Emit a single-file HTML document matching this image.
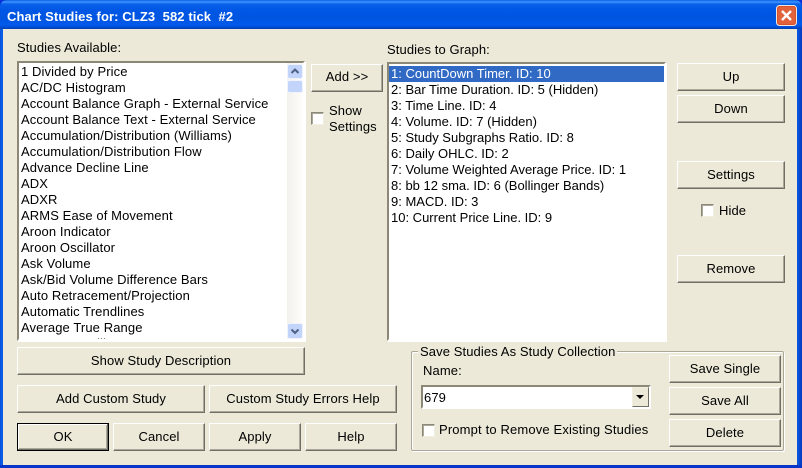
<!DOCTYPE html>
<html><head><meta charset="utf-8">
<style>
html,body{margin:0;padding:0;width:802px;height:468px;overflow:hidden;background:#0831d9}
*{box-sizing:border-box}
body{position:relative;font-family:"Liberation Sans",sans-serif;font-size:13px;color:#000;letter-spacing:.1px}
.a{position:absolute}
#tb{left:0;top:0;width:802px;height:29px;border-radius:7px 7px 0 0;background:linear-gradient(to bottom,#0a5fe0 0,#3d95ff 2px,#0a62ea 4px,#0058e6 9px,#0055e0 18px,#0259ec 25px,#0047c8 28px,#003bb0 29px)}
#title{left:7px;top:8px;color:#fff;font-weight:bold;font-size:13px;line-height:18px;white-space:pre;letter-spacing:.1px}
#cl{left:3px;top:29px;width:794px;height:436px;background:#ece9d8}
#lb{left:0;top:29px;width:3px;height:439px;background:linear-gradient(to right,#0855dd,#0b5fe8)}
#rb{left:797px;top:29px;width:5px;height:439px;background:linear-gradient(to right,#0a5ae0,#0438c0)}
#bb{left:0;top:465px;width:802px;height:3px;background:#0635c8}
.b{position:absolute;background:#ece9d8;border:1px solid;border-color:#fff #716f64 #716f64 #fff;box-shadow:inset -1px -1px 0 #aca899;text-align:center;white-space:pre;line-height:26px}
.l{position:absolute;white-space:pre;line-height:16px}
.list{position:absolute;background:#fff;border:2px solid;border-color:#8b8878 #fff #fff #8b8878;box-shadow:1px 1px 0 #fff;overflow:hidden}
.list div{position:absolute;left:2px;white-space:pre;line-height:16px;height:16px}
.cb{position:absolute;width:13px;height:13px;background:#fff;border:1px solid #8a8878;border-right-color:#f1efe2;border-bottom-color:#f1efe2;box-shadow:inset 1px 1px 0 #aca899}
#sel{background:#316ac5;color:#fff;left:0!important;width:275px;padding-left:2px}
</style></head><body>
<div class="a" id="tb"></div>
<div class="a" id="title">Chart Studies for: CLZ3  582 tick  #2</div>
<svg class="a" style="left:776px;top:5px" width="21" height="21" viewBox="0 0 21 21">
<rect x=".5" y=".5" width="20" height="20" rx="3" fill="#d8532c" stroke="#f0e8e4"/>
<rect x="2" y="2" width="17" height="17" rx="2" fill="#e2623c"/>
<path d="M6 6L15 15M15 6L6 15" stroke="#fff" stroke-width="2.4" fill="none"/>
</svg>
<div class="a" id="lb"></div><div class="a" id="rb"></div><div class="a" id="bb"></div>
<div class="a" id="cl"></div>

<div class="l" style="left:17px;top:40px">Studies Available:</div>
<div class="l" style="left:387px;top:42px">Studies to Graph:</div>

<div class="list" style="left:17px;top:61px;width:288px;height:280px">
<div style="top:1px">1 Divided by Price</div>
<div style="top:17px">AC/DC Histogram</div>
<div style="top:33px">Account Balance Graph - External Service</div>
<div style="top:49px">Account Balance Text - External Service</div>
<div style="top:65px">Accumulation/Distribution (Williams)</div>
<div style="top:81px">Accumulation/Distribution Flow</div>
<div style="top:97px">Advance Decline Line</div>
<div style="top:113px">ADX</div>
<div style="top:129px">ADXR</div>
<div style="top:145px">ARMS Ease of Movement</div>
<div style="top:161px">Aroon Indicator</div>
<div style="top:177px">Aroon Oscillator</div>
<div style="top:193px">Ask Volume</div>
<div style="top:209px">Ask/Bid Volume Difference Bars</div>
<div style="top:225px">Auto Retracement/Projection</div>
<div style="top:241px">Automatic Trendlines</div>
<div style="top:257px">Average True Range</div>
<div style="top:273px">Average Oscillator</div>
<div class="a" style="left:268px;top:0;width:16px;height:276px;background:linear-gradient(to right,#f3f1ec,#fdfdfb)"></div>
</div>
<svg class="a" style="left:287px;top:64px" width="16" height="30" viewBox="0 0 16 30">
<rect x=".5" y=".5" width="15" height="14" rx="2" fill="#c3d4fb" stroke="#eef3fe"/>
<path d="M4.5 9L8 5.5L11.5 9" stroke="#4d6185" stroke-width="2" fill="none"/>
<rect x=".5" y="16.5" width="15" height="12" rx="2" fill="#c3d4fb" stroke="#eef3fe"/>
</svg>
<svg class="a" style="left:287px;top:323px" width="16" height="17" viewBox="0 0 16 17">
<rect x=".5" y=".5" width="15" height="15" rx="2" fill="#c3d4fb" stroke="#eef3fe"/>
<path d="M4.5 6.5L8 10L11.5 6.5" stroke="#4d6185" stroke-width="2" fill="none"/>
</svg>

<div class="b" style="left:311px;top:64px;width:72px;height:28px;line-height:24px">Add &gt;&gt;</div>
<div class="cb" style="left:311px;top:112px"></div>
<div class="l" style="left:329px;top:103px">Show</div>
<div class="l" style="left:329px;top:119px">Settings</div>

<div class="list" style="left:387px;top:62px;width:279px;height:279px;letter-spacing:0">
<div id="sel" style="top:2px">1: CountDown Timer. ID: 10</div>
<div style="top:18px">2: Bar Time Duration. ID: 5 (Hidden)</div>
<div style="top:34px">3: Time Line. ID: 4</div>
<div style="top:50px">4: Volume. ID: 7 (Hidden)</div>
<div style="top:66px">5: Study Subgraphs Ratio. ID: 8</div>
<div style="top:82px">6: Daily OHLC. ID: 2</div>
<div style="top:98px">7: Volume Weighted Average Price. ID: 1</div>
<div style="top:114px">8: bb 12 sma. ID: 6 (Bollinger Bands)</div>
<div style="top:130px">9: MACD. ID: 3</div>
<div style="top:146px">10: Current Price Line. ID: 9</div>
</div>

<div class="b" style="left:677px;top:63px;width:108px;height:28px">Up</div>
<div class="b" style="left:677px;top:95px;width:108px;height:28px">Down</div>
<div class="b" style="left:677px;top:161px;width:108px;height:28px">Settings</div>
<div class="cb" style="left:701px;top:204px"></div>
<div class="l" style="left:719px;top:203px">Hide</div>
<div class="b" style="left:677px;top:255px;width:108px;height:28px">Remove</div>

<div class="b" style="left:17px;top:347px;width:288px;height:28px">Show Study Description</div>
<div class="b" style="left:17px;top:385px;width:188px;height:28px">Add Custom Study</div>
<div class="b" style="left:209px;top:385px;width:188px;height:28px">Custom Study Errors Help</div>
<div class="b" style="left:17px;top:423px;width:92px;height:28px;border:1px solid #000;box-shadow:inset -1px -1px 0 #716f64,inset 1px 1px 0 #fff,inset -2px -2px 0 #aca899;line-height:26px">OK</div>
<div class="b" style="left:113px;top:423px;width:92px;height:28px">Cancel</div>
<div class="b" style="left:209px;top:423px;width:92px;height:28px">Apply</div>
<div class="b" style="left:305px;top:423px;width:92px;height:28px">Help</div>

<div class="a" style="left:411px;top:351px;width:373px;height:100px;border:1px solid #aca899;box-shadow:1px 1px 0 #fff,inset 1px 1px 0 #fff;border-radius:2px"></div>
<div class="l" style="left:418px;top:344px;background:#ece9d8;padding:0 2px">Save Studies As Study Collection</div>
<div class="l" style="left:423px;top:363px">Name:</div>
<div class="a" style="left:421px;top:385px;width:230px;height:24px;background:#fff;border:2px solid;border-color:#8b8878 #fff #fff #8b8878;line-height:22px;padding-left:1px;font-size:13px">679</div>
<div class="a" style="left:632px;top:387px;width:17px;height:20px;background:#ece9d8;border:1px solid;border-color:#f1efe2 #716f64 #716f64 #f1efe2"></div>
<div class="a" style="left:636px;top:395px;width:0;height:0;border-left:4px solid transparent;border-right:4px solid transparent;border-top:4px solid #000"></div>
<div class="cb" style="left:422px;top:424px"></div>
<div class="l" style="left:439px;top:422px;letter-spacing:.15px">Prompt to Remove Existing Studies</div>
<div class="b" style="left:669px;top:355px;width:112px;height:28px">Save Single</div>
<div class="b" style="left:669px;top:387px;width:112px;height:28px">Save All</div>
<div class="b" style="left:669px;top:419px;width:112px;height:28px">Delete</div>
</body></html>
